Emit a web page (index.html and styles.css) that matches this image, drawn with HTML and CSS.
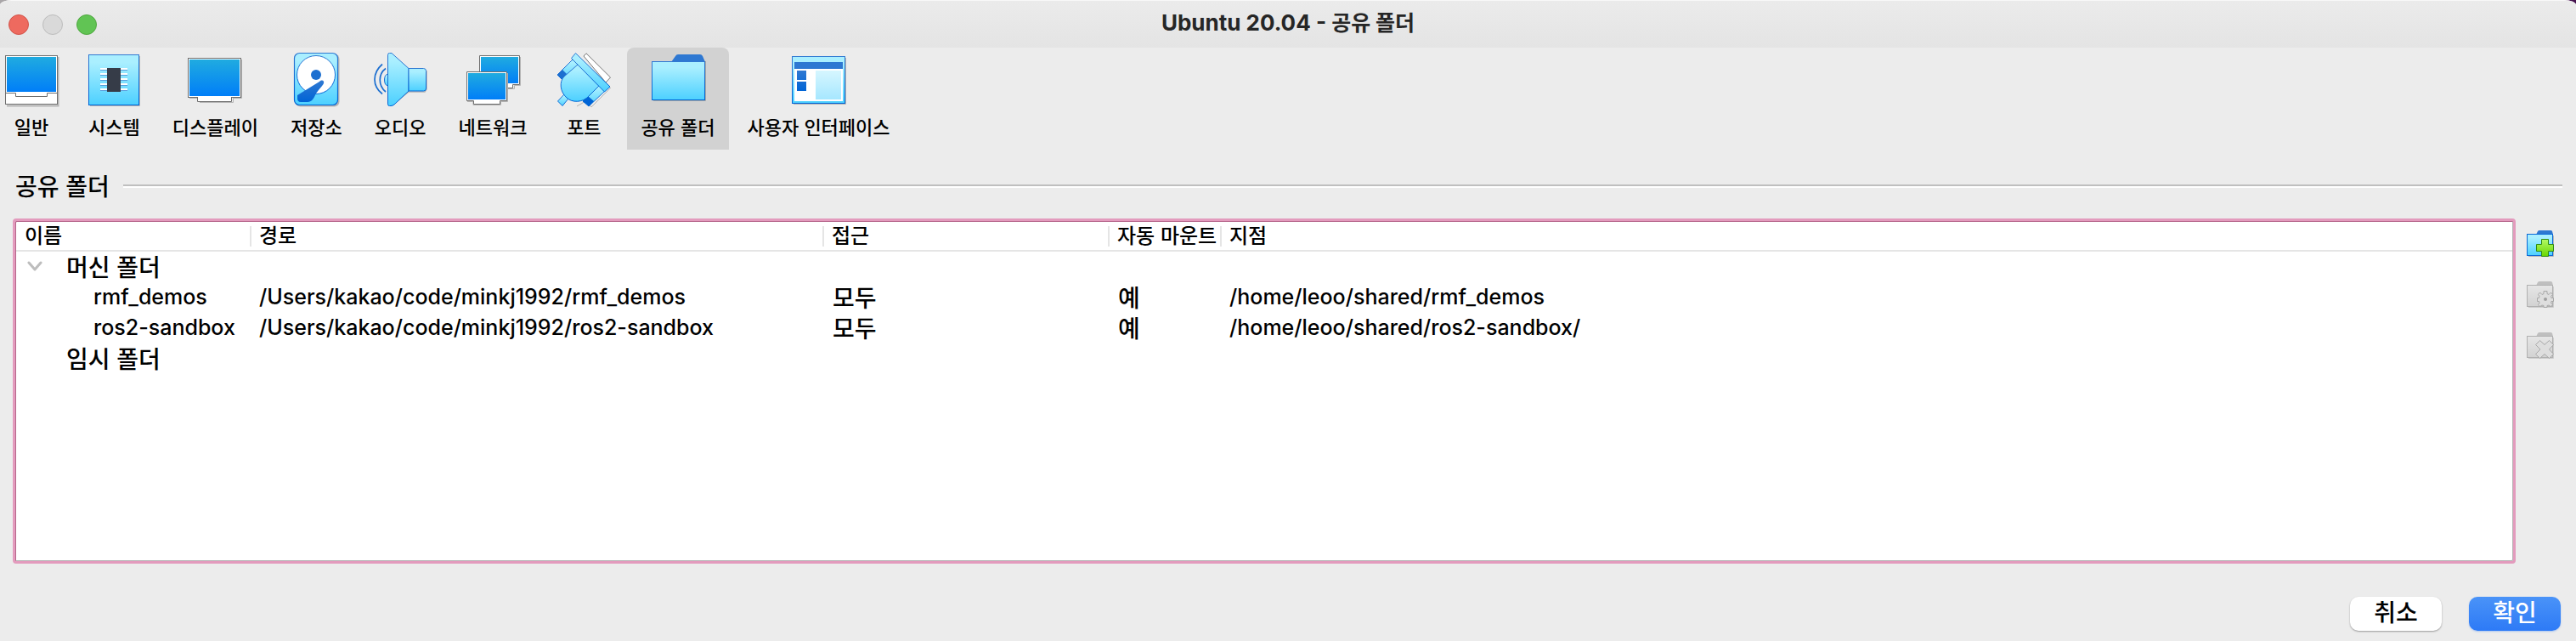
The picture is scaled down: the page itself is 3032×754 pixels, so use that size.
FILE: index.html
```html
<!DOCTYPE html>
<html lang="ko">
<head>
<meta charset="utf-8">
<title>Ubuntu 20.04 - 공유 폴더</title>
<link rel="stylesheet" href="styles.css">
</head>
<body>
<svg class="defs" aria-hidden="true">
  <defs>
    <linearGradient id="screen" x1="0" y1="0" x2="0" y2="1"><stop offset="0" stop-color="#20abe0"/><stop offset="1" stop-color="#007ef8"/></linearGradient>
    <linearGradient id="sky" x1="0" y1="0" x2="0" y2="1"><stop offset="0.15" stop-color="#aaefff"/><stop offset="1" stop-color="#4cd0ff"/></linearGradient>
    <linearGradient id="edge" x1="0" y1="0" x2="0" y2="1"><stop offset="0" stop-color="#3079d2"/><stop offset="1" stop-color="#0064d6"/></linearGradient>
    <linearGradient id="pane" x1="0" y1="0" x2="0" y2="1"><stop offset="0" stop-color="#d6f6ff"/><stop offset="1" stop-color="#a6e7ff"/></linearGradient>
    <linearGradient id="lime" x1="0" y1="0" x2="0" y2="1"><stop offset="0" stop-color="#b4fa66"/><stop offset="1" stop-color="#68d600"/></linearGradient>
    <linearGradient id="ash" x1="0" y1="0" x2="0" y2="1"><stop offset="0" stop-color="#e6e6e6"/><stop offset="1" stop-color="#d2d2d2"/></linearGradient>
  </defs>
</svg>
<div class="window">
  <header class="titlebar">
    <div class="lights">
      <button class="light light-close" aria-label="닫기"></button>
      <button class="light light-min" aria-label="최소화"></button>
      <button class="light light-zoom" aria-label="확대"></button>
    </div>
    <h1 class="title">Ubuntu 20.04 - <span class="title-ko">공유 폴더</span></h1>
  </header>

  <nav class="toolbar">
    <button class="tool">
      <svg class="icon" viewBox="0 0 64 64"><path d="M3 62.500H63.500V5" fill="none" stroke="#b4b4b4" stroke-width="2"/><rect x="1.500" y="3.500" width="61" height="57" fill="#fff" stroke="#6e6e6e"/><path d="M1.500 47.500H13.500V51.500H50.500V47.500H62" fill="none" stroke="#6e6e6e"/><rect x="3" y="5" width="58" height="41" fill="url(#screen)"/></svg>
      <span class="label">일반</span>
    </button>
    <button class="tool">
      <svg class="icon" viewBox="0 0 64 64"><path d="M4 62.500H62.500V4" fill="none" stroke="#b4b4b4"/><rect x="2.500" y="2.500" width="59" height="59" fill="url(#sky)" stroke="url(#edge)"/><path d="M16 19H48M16 25H48M16 31H48M16 37H48M16 43H48" stroke="#fff" stroke-width="2"/><path d="M16 20.500H48M16 26.500H48M16 32.500H48M16 38.500H48M16 44.500H48" stroke="#5a9fdc"/><rect x="24" y="18" width="16" height="28" fill="#363c48"/></svg>
      <span class="label">시스템</span>
    </button>
    <button class="tool">
      <svg class="icon" viewBox="0 0 64 64"><path d="M2 53.500H13M53 53.500H63.500V8M14 58.500H53.500V54" fill="none" stroke="#b4b4b4"/><path d="M11.500 52.500V57.500H51.500V52.500" fill="#fff" stroke="#6e6e6e"/><rect x="0.500" y="6.500" width="62" height="46" fill="#fff" stroke="#6e6e6e"/><rect x="12" y="51" width="39" height="6" fill="#fff"/><rect x="2" y="8" width="59" height="43" fill="url(#screen)"/></svg>
      <span class="label">디스플레이</span>
    </button>
    <button class="tool">
      <svg class="icon" viewBox="0 0 64 64"><rect x="7.500" y="1.500" width="52" height="62" rx="6" fill="#b4b4b4"/><rect x="6.500" y="0.500" width="51" height="61" rx="6" fill="url(#sky)" stroke="url(#edge)" stroke-width="1.200"/><circle cx="32" cy="26" r="22.500" fill="#fff" stroke="url(#edge)"/><circle cx="32" cy="26" r="6" fill="#1c6fd0"/><path d="M10 50L36 34C39 31 42 33 41 36C40 39 33 45 31 50C29 54 27 58 22 58H14C11 58 10 56 10 54Z" fill="url(#edge)"/></svg>
      <span class="label">저장소</span>
    </button>
    <button class="tool">
      <svg class="icon" viewBox="0 0 64 64"><path d="M22 62L42 46H61L63 43V21" fill="none" stroke="#b4b4b4" stroke-width="1.500"/><path d="M17.500 25Q13.500 26 13.500 32Q13.500 38 17.500 39Z" fill="url(#sky)" stroke="#1c6fd0"/><path d="M15 18.500C6 25 6 39 15 46M11 13.500C-1 24 -1 39 11 48.500" fill="none" stroke="#1c6fd0" stroke-width="1.700"/><path d="M17.500 2.500Q17.500 0.500 19.500 0.500H22L42 18.500V45L25 61Q23 62.500 21 62.500H19.500Q17.500 62.500 17.500 60.500Z" fill="url(#sky)" stroke="url(#edge)"/><path d="M42 18.500H59.500Q62.500 18.500 62.500 21.500V42Q62.500 45 59.500 45H42Z" fill="url(#sky)" stroke="url(#edge)"/></svg>
      <span class="label">오디오</span>
    </button>
    <button class="tool">
      <svg class="icon" viewBox="0 0 64 64"><path d="M50 42.500H57.500V38.500H64.500V5" fill="none" stroke="#b4b4b4"/><path d="M16.500 3.500H63.500V37.500H55.500V41.500H44V37.500H16.500Z" fill="#fff" stroke="#6e6e6e"/><rect x="18" y="5" width="44" height="31" fill="url(#screen)"/><path d="M2 57.500H9V61.500H41.500V57.500H49.500V24" fill="none" stroke="#b4b4b4"/><path d="M1.500 22.500H48.500V56.500H40.500V60.500H9.500V56.500H1.500Z" fill="#fff" stroke="#6e6e6e"/><rect x="3" y="24" width="44" height="31" fill="url(#screen)"/></svg>
      <span class="label">네트워크</span>
    </button>
    <button class="tool">
      <svg class="icon" viewBox="0 0 64 64"><path d="M32 4L35 0.800L63.500 29L58 35Z" fill="#fff" stroke="#777" stroke-linejoin="round"/><path d="M24 63L36 56L41 64L64 41" fill="none" stroke="#b4b4b4"/><path d="M1 26L19 8L26 15L8 33Z" fill="url(#sky)" stroke="url(#edge)"/><path d="M1 26L7 20L14 27L8 33Z" fill="#1c6fd0"/><path d="M31 57L50 38L57 45L38 63Z" fill="url(#sky)" stroke="url(#edge)"/><path d="M31 57L37 51L44 57L38 63Z" fill="#0064d6"/><path d="M1.500 57L9 49L14 54L7 62.500Z" fill="url(#sky)" stroke="url(#edge)"/><path d="M25 14L50 39L38 51C31 59 18 59 12 53C4 46 3 34 9 28Z" fill="url(#sky)" stroke="url(#edge)"/><path d="M22.500 0.500L63 40L56.500 46L17.500 6.500Z" fill="url(#sky)" stroke="url(#edge)" stroke-linejoin="round"/></svg>
      <span class="label">포트</span>
    </button>
    <button class="tool tool-active" aria-pressed="true">
      <svg class="icon" viewBox="0 0 64 64"><path d="M3 56.500H64.500V10" fill="none" stroke="#a5a5a5"/><path d="M24 11L29 4Q30 2 32 2H58Q60 2 61 4L64 11Z" fill="#2e78d2"/><rect x="1.500" y="10.500" width="62" height="45" fill="url(#sky)" stroke="url(#edge)"/></svg>
      <span class="label">공유 폴더</span>
    </button>
    <button class="tool">
      <svg class="icon" viewBox="0 0 64 64"><path d="M2 60.500H63.500V6" fill="none" stroke="#b4b4b4"/><rect x="0.500" y="4.500" width="62" height="55" fill="url(#sky)" stroke="url(#edge)"/><rect x="3" y="11" width="57" height="46" fill="#fff"/><rect x="3" y="11" width="57" height="8" fill="#2e78d2"/><path d="M6 21H17V32H6ZM6 34H17V45H6Z" fill="url(#edge)"/><rect x="28" y="21" width="30" height="34" fill="url(#pane)"/></svg>
      <span class="label">사용자 인터페이스</span>
    </button>
  </nav>

  <main class="content">
    <div class="section">
      <h2 class="section-title">공유 폴더</h2>
      <div class="rule"></div>
    </div>
    <div class="panel">
      <div class="frame">
        <table class="folders">
          <colgroup><col class="c-name"><col class="c-path"><col class="c-access"><col class="c-auto"><col></colgroup>
          <thead>
            <tr><th>이름</th><th>경로</th><th>접근</th><th>자동 마운트</th><th>지점</th></tr>
          </thead>
          <tbody>
            <tr>
              <td colspan="5"><div class="group"><button class="toggle" aria-label="접기"><svg viewBox="0 0 18 12"><path d="M2 2L9 10L16 2" fill="none" stroke="#bdbdbd" stroke-width="3" stroke-linecap="round" stroke-linejoin="round"/></svg></button><span>머신 폴더</span></div></td>
            </tr>
            <tr><td class="child">rmf_demos</td><td>/Users/kakao/code/minkj1992/rmf_demos</td><td class="ko">모두</td><td class="ko">예</td><td>/home/leoo/shared/rmf_demos</td></tr>
            <tr><td class="child">ros2-sandbox</td><td>/Users/kakao/code/minkj1992/ros2-sandbox</td><td class="ko">모두</td><td class="ko">예</td><td>/home/leoo/shared/ros2-sandbox/</td></tr>
            <tr><td colspan="5"><div class="group group-leaf"><span>임시 폴더</span></div></td></tr>
          </tbody>
        </table>
      </div>
      <div class="side">
        <button class="side-btn" aria-label="공유 폴더 추가"><svg viewBox="0 0 32 32"><path d="M2 30.500H31.500V6" fill="none" stroke="#b4b4b4"/><path d="M11 5L13 1Q13.500 0 15 0H28Q29.500 0 30 1L31 5Z" fill="#2e78d2"/><rect x="0.500" y="4.500" width="30" height="25" fill="url(#sky)" stroke="#0a68d6"/><path d="M17.500 10.500H25.500V16.500H31.500V24.500H25.500V30.500H17.500V24.500H11.500V16.500H17.500Z" fill="url(#lime)" stroke="#2f8a10"/></svg></button>
        <button class="side-btn" aria-label="공유 폴더 편집" disabled><svg viewBox="0 0 32 32"><path d="M2 30.500H31.500V6" fill="none" stroke="#cdcdcd"/><path d="M11 5L13 1Q13.500 0 15 0H28Q29.500 0 30 1L31 5Z" fill="#bfbfbf"/><rect x="0.500" y="4.500" width="30" height="25" fill="url(#ash)" stroke="#b0b0b0"/><path d="M20 11.500H24V14.500L26 15.500L28.500 13L30.500 15.500L28.500 17.500L29 19.500H31.500V23.500H29L28.500 25.500L30.500 27.500L28.500 29.500L26 28L24 28.500V30.500H20V28.500L18 28L15.500 29.500L13.500 27.500L15 25.500L14.500 23.500H12.500V19.500H14.500L15 17.500L13.500 15.500L15.500 13L18 15.500L20 14.500Z" fill="#dedede" stroke="#a8a8a8"/><circle cx="22" cy="21" r="2" fill="#a0a0a0"/></svg></button>
        <button class="side-btn" aria-label="공유 폴더 제거" disabled><svg viewBox="0 0 32 32"><path d="M2 30.500H31.500V6" fill="none" stroke="#cdcdcd"/><path d="M11 5L13 1Q13.500 0 15 0H28Q29.500 0 30 1L31 5Z" fill="#bfbfbf"/><rect x="0.500" y="4.500" width="30" height="25" fill="url(#ash)" stroke="#b0b0b0"/><path d="M15.500 9.500L21 14.500L26.500 9.500L31.500 14.500L26.500 20L31.500 25.500L26.500 30.500L21 25.500L15.500 30.500L10.500 25.500L16 20L10.500 14.500Z" fill="#dedede" stroke="#a8a8a8" stroke-linejoin="round"/></svg></button>
      </div>
    </div>
  </main>

  <footer class="actions">
    <button class="btn">취소</button>
    <button class="btn btn-primary">확인</button>
  </footer>
</div>
</body>
</html>
```
FILE: styles.css
```css
* { box-sizing: border-box; }

body {
  margin: 0;
  background: linear-gradient(90deg, #a9a6a8 50%, #46124f 50%);
  color: #000;
  font-family: Inter, "Noto Sans CJK KR", sans-serif;
}

button {
  margin: 0;
  padding: 0;
  border: 0;
  background: none;
  color: inherit;
  font: inherit;
}

svg { display: block; }

.defs {
  position: absolute;
  width: 0;
  height: 0;
}

.window {
  display: flex;
  flex-direction: column;
  min-height: 100vh;
  overflow: hidden;
  border-radius: 14px 14px 0 0 / 6px 6px 0 0;
  background: #ececec;
}

.titlebar {
  display: grid;
  grid-template-columns: 1fr auto 1fr;
  align-items: center;
  height: 56px;
  padding: 0 10px;
  border-top: 1px solid #f8f8f8;
  background: linear-gradient(#ebebeb, #e4e4e4);
}

.lights {
  display: flex;
  gap: 16px;
}

.light {
  width: 24px;
  height: 24px;
  border: 1px solid;
  border-radius: 50%;
}

.light-close { background: #ee6a5f; border-color: #d15349; }
.light-min { background: #d9d9d9; border-color: #bcbcbc; }
.light-zoom { background: #61c454; border-color: #4fa73f; }

.title {
  margin: 0;
  padding-bottom: 3px;
  color: #262626;
  font-size: 26px;
  font-weight: 700;
  line-height: 32px;
}

.title-ko { font-size: 25px; }

.toolbar {
  display: flex;
  gap: 6px;
  margin-left: -8px;
}

.tool {
  display: flex;
  flex-direction: column;
  align-items: center;
  gap: 6px;
  min-width: 90px;
  height: 120px;
  padding-top: 6px;
  font-family: "Noto Sans CJK KR", sans-serif;
  font-size: 22px;
  font-weight: 500;
  line-height: 32px;
  white-space: nowrap;
}

.tool-active {
  border-radius: 8px 8px 0 0;
  background: #d2d2d2;
}

.icon {
  flex: none;
  width: 64px;
  height: 64px;
  overflow: visible;
}

.label { padding: 0 16px; }

.content {
  display: flex;
  flex: 1;
  flex-direction: column;
  gap: 17px;
  padding: 22px 16px 0 15px;
}

.section {
  display: flex;
  align-items: center;
  gap: 16px;
  padding-left: 3px;
}

.section-title {
  margin: 0;
  padding-bottom: 2px;
  font-family: "Noto Sans CJK KR", sans-serif;
  font-size: 28px;
  font-weight: 500;
  line-height: 40px;
}

.rule {
  flex: 1;
  height: 4px;
  border-top: 2px solid #bfbfbf;
  background: #fff;
}

.panel {
  display: flex;
  flex: 1;
  gap: 13px;
}

.frame {
  flex: 1;
  padding: 1px;
  border: 3px solid #e39bbd;
  border-radius: 4px;
  background: #fff;
  box-shadow: inset 1px 1px #b5658a, inset -1px -1px #b4b4b4;
}

.folders {
  width: 100%;
  border-collapse: separate;
  border-spacing: 0;
  table-layout: fixed;
  font-size: 25px;
  font-weight: 500;
  line-height: 34px;
}

.c-name { width: 277px; }
.c-path { width: 674px; }
.c-access { width: 336px; }
.c-auto { width: 132px; }

.folders th {
  height: 35px;
  padding: 0 0 3px 9px;
  border-bottom: 2px solid #e5e5e5;
  background: linear-gradient(#e5e5e5, #e5e5e5) right 5px / 2px 24px no-repeat;
  font-family: "Noto Sans CJK KR", sans-serif;
  font-size: 24px;
  font-weight: 500;
  line-height: 30px;
  text-align: left;
  white-space: nowrap;
}

.folders th:first-child { padding-left: 10px; }
.folders th:last-child { background: none; }

.folders td {
  height: 36px;
  padding: 0 0 2px 9px;
  white-space: nowrap;
}

.folders .child { padding-left: 91px; }

.folders .ko,
.group {
  font-family: "Noto Sans CJK KR", sans-serif;
  font-size: 28px;
}

.folders .ko { padding-left: 10px; }

.group {
  display: flex;
  align-items: center;
  gap: 28px;
  padding-left: 4px;
}

.group-leaf { padding-left: 50px; }

.toggle {
  width: 18px;
  height: 12px;
}

.side {
  display: flex;
  flex-direction: column;
  gap: 28px;
  width: 42px;
  padding-top: 14px;
}

.side-btn,
.side-btn svg {
  width: 32px;
  height: 32px;
}

.actions {
  display: flex;
  justify-content: flex-end;
  gap: 32px;
  padding: 39px 18px 12px;
}

.btn {
  width: 108px;
  height: 40px;
  padding-bottom: 6px;
  border-radius: 10px;
  background: #fff;
  box-shadow: 0 1px 2px rgba(0, 0, 0, 0.35);
  font-family: "Noto Sans CJK KR", sans-serif;
  font-size: 28px;
  font-weight: 500;
  line-height: 34px;
}

.btn-primary {
  background: linear-gradient(#4a93f8, #2d7af6);
  box-shadow: 0 1px 2px rgba(45, 122, 246, 0.35);
  color: #fff;
}
```
